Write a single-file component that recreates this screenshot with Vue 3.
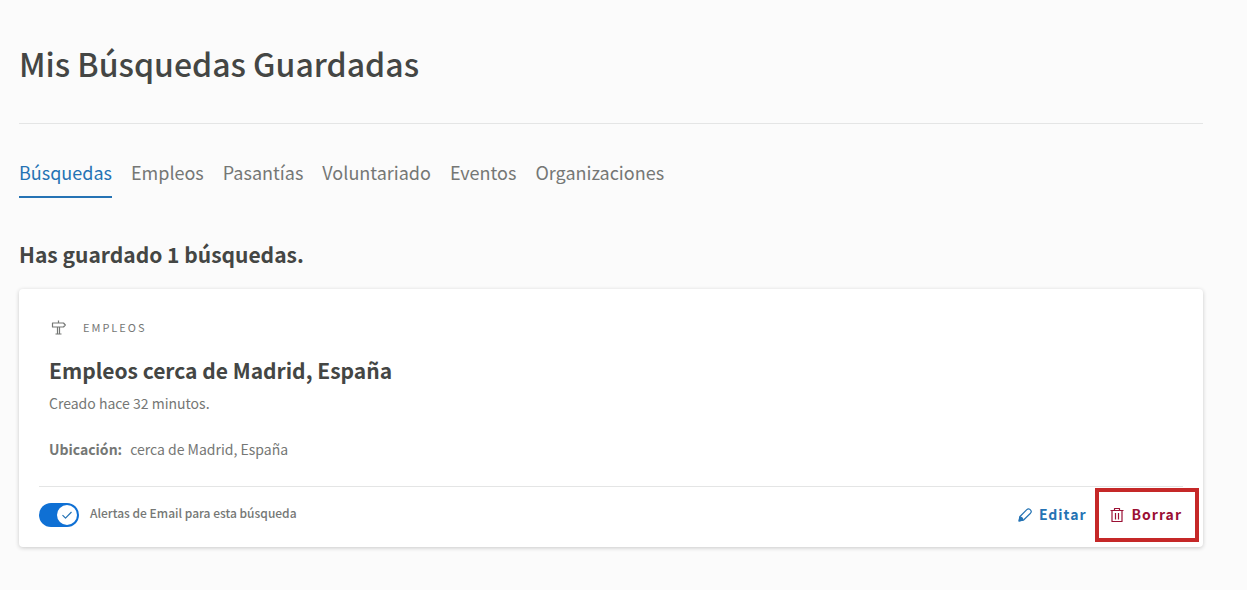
<script setup>
import { ref } from 'vue'

const tabs = ['Búsquedas', 'Empleos', 'Pasantías', 'Voluntariado', 'Eventos', 'Organizaciones']
const active = ref('Búsquedas')
const alerts = ref(true)
</script>

<template>
  <main class="page">
    <header class="page-header">
      <h1>Mis Búsquedas Guardadas</h1>
    </header>

    <nav class="tabs">
      <a
        v-for="tab in tabs"
        :key="tab"
        href="#"
        class="tab"
        :class="{ active: tab === active }"
        @click.prevent="active = tab"
      >{{ tab }}</a>
    </nav>

    <h2 class="summary">Has guardado 1 búsquedas.</h2>

    <article class="card">
      <div class="card-body">
        <div class="kind">
          <svg class="sign" viewBox="0 0 16 16" aria-hidden="true">
            <path d="M7.500 1.500v2M1.500 4h11l1.800 2-1.800 2h-11zM6.500 8v7M8.500 8v7M4.500 15h6" />
          </svg>
          <span>EMPLEOS</span>
        </div>
        <h3>Empleos cerca de Madrid, España</h3>
        <p class="created">Creado hace 32 minutos.</p>
        <p class="place"><strong>Ubicación:</strong><span>cerca de Madrid, España</span></p>
      </div>
      <hr />
      <footer class="card-footer">
        <label class="alerts" for="alerts">
          <span class="switch">
            <input id="alerts" v-model="alerts" type="checkbox" />
            <span class="knob">
              <svg v-if="alerts" viewBox="0 0 12 12" aria-hidden="true"><path d="M1.500 6.200l3 3L10.500 3" /></svg>
            </span>
          </span>
          <span class="alerts-text">Alertas de Email para esta búsqueda</span>
        </label>
        <div class="actions">
          <button type="button" class="action edit">
            <svg viewBox="0 0 14 14" aria-hidden="true">
              <path d="M1.200 12.800l.8-4.300L8.800 1.600c1-1 2.200-1 3.100-.2l.7.7c.9.9.8 2.100-.1 3.100L5.600 12z" />
              <path class="tip" d="M1 13l.8-4.100c1.500.2 2.900 1.500 3.300 3.200z" />
            </svg>
            <span>Editar</span>
          </button>
          <button type="button" class="action delete">
            <svg viewBox="0 0 14 16" aria-hidden="true">
              <path d="M.5 3.500h13M4.500 3.500v-2h5v2M2 3.500v11h10v-11M5.500 6v6.500M8.500 6v6.500" />
            </svg>
            <span>Borrar</span>
          </button>
        </div>
      </footer>
    </article>
  </main>
</template>

<style>
body {
  background: #fbfbfb;
}
</style>

<style scoped>
.page {
  padding: 39px 44px 40px 19px;
  font-family: "Noto Sans CJK SC", "Noto Sans", sans-serif;
  color: #444644;
}

h1, h2, h3, p {
  margin: 0;
}

.page-header {
  padding-bottom: 36px;
  border-bottom: 1px solid #e4e5e5;
}

h1 {
  font-size: 32px;
  line-height: 48px;
  font-weight: 500;
}

.tabs {
  display: flex;
  gap: 19px;
  margin-top: 35px;
}

.tab {
  padding-bottom: 11px;
  border-bottom: 2px solid transparent;
  color: #757775;
  font-size: 18px;
  line-height: 26px;
  text-decoration: none;
}

.tab.active {
  border-color: #2573b4;
  color: #2573b4;
}

.summary {
  margin-top: 40px;
  font-size: 21px;
  line-height: 32px;
  font-weight: 700;
}

.card {
  margin-top: 19px;
  border-radius: 4px;
  background: #fff;
  box-shadow: 0 1px 4px rgba(0, 0, 0, 0.2);
}

.card-body {
  padding: 27px 30px 25px;
}

.kind {
  display: flex;
  align-items: center;
  gap: 16px;
  color: #757775;
  font-size: 11px;
  line-height: 22px;
  letter-spacing: 2px;
}

.sign {
  width: 16px;
  height: 16px;
  margin-left: 2px;
}

svg {
  fill: none;
  stroke: currentColor;
  stroke-width: 1.2;
  stroke-linejoin: round;
}

h3 {
  margin-top: 16px;
  font-size: 21px;
  line-height: 32px;
  font-weight: 700;
}

.created,
.place {
  color: #757775;
  font-size: 14px;
  line-height: 24px;
}

.created {
  margin-top: 5px;
}

.place {
  display: flex;
  gap: 8px;
  margin-top: 22px;
}

hr {
  height: 1px;
  margin: 0 20px;
  border: 0;
  background: #e4e5e5;
}

.card-footer {
  display: flex;
  justify-content: space-between;
  padding: 1px 4px 5px 20px;
}

.alerts {
  display: flex;
  align-items: center;
  gap: 11px;
  color: #757775;
}

.alerts-text {
  padding-bottom: 4px;
  font-size: 12px;
  line-height: 18px;
  font-weight: 500;
}

.switch {
  position: relative;
  display: flex;
}

.switch input {
  width: 40px;
  height: 24px;
  margin: 0;
  border-radius: 12px;
  background: #9a9c9a;
  appearance: none;
}

.switch input:checked {
  background: #0f70d4;
}

.knob {
  position: absolute;
  top: 2px;
  left: 2px;
  display: flex;
  align-items: center;
  justify-content: center;
  width: 20px;
  height: 20px;
  border-radius: 50%;
  background: #fff;
  color: #2573b4;
  pointer-events: none;
}

.switch input:checked + .knob {
  left: 18px;
}

.knob svg {
  width: 12px;
  height: 12px;
}

.actions {
  display: flex;
}

.action {
  display: flex;
  align-items: center;
  gap: 8px;
  padding: 0 8px;
  border: 0;
  background: transparent;
  font-family: inherit;
  font-size: 14px;
  line-height: 24px;
  font-weight: 700;
  letter-spacing: 1px;
}

.action span {
  padding-bottom: 2px;
}

.action svg {
  width: 14px;
  height: 16px;
}

.edit {
  gap: 7px;
  color: #2573b4;
}

.edit .tip {
  fill: currentColor;
}

.delete {
  height: 54px;
  padding: 0 13px 0 11px;
  border: 4px solid #c52828;
  color: #9b1034;
}
</style>
